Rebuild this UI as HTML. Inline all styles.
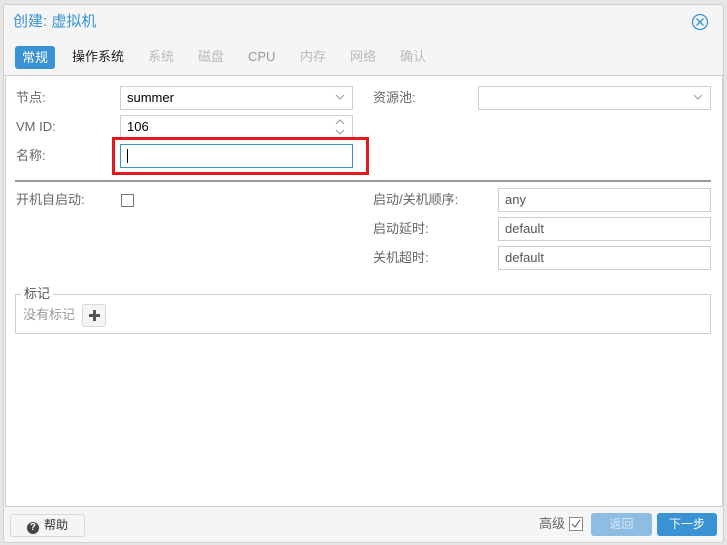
<!DOCTYPE html>
<html><head><meta charset="utf-8"><style>
*{box-sizing:border-box;margin:0;padding:0}
body{width:727px;height:545px;background:#e6e6e6;font-family:"Liberation Sans","Noto Sans CJK SC",sans-serif;font-size:13px;line-height:16px;color:#333;position:relative;overflow:hidden}
.a{position:absolute}
.win{left:3px;top:4px;width:721px;height:539px;background:#f5f5f5;border:1px solid #d0d0d0;border-radius:3px}
.body{left:5px;top:75px;width:718px;height:432px;background:#fff;border:1px solid #cfcfcf}
.lbl{color:#666;font-size:13px;height:16px}
.inp{background:#fff;border:1px solid #cfcfcf;height:24px;padding:0 6px;line-height:22px;color:#000}
.tab{top:49px;font-size:13px;color:#bbb;height:16px}
.btn{border-radius:3px;text-align:center;line-height:23px;height:23px}
</style></head><body>
<div class="a win"></div>
<div class="a" style="left:13px;top:13px;font-size:15px;line-height:18px;color:#3892d4">创建: 虚拟机</div>
<svg class="a" style="left:691px;top:13px" width="18" height="18" viewBox="0 0 18 18"><circle cx="9" cy="9" r="7.5" fill="none" stroke="#3892d4" stroke-width="1.3"/><path d="M5.5 5.5L12.5 12.5M12.5 5.5L5.5 12.5" stroke="#3892d4" stroke-width="1.3"/></svg>
<div class="a btn" style="left:15px;top:46px;width:40px;background:#3892d4;color:#fff">常规</div>
<div class="a tab" style="left:72px;color:#222">操作系统</div>
<div class="a tab" style="left:148px">系统</div>
<div class="a tab" style="left:198px">磁盘</div>
<div class="a tab" style="left:248px;color:#999">CPU</div>
<div class="a tab" style="left:300px">内存</div>
<div class="a tab" style="left:350px">网络</div>
<div class="a tab" style="left:400px">确认</div>
<div class="a body"></div>
<div class="a lbl" style="left:16px;top:90px">节点:</div>
<div class="a inp" style="left:120px;top:86px;width:233px">summer</div>
<svg class="a" style="left:335px;top:93px" width="10" height="8"><path d="M1 2L5 6L9 2" fill="none" stroke="#999"/></svg>
<div class="a lbl" style="left:373px;top:90px">资源池:</div>
<div class="a inp" style="left:478px;top:86px;width:233px"></div>
<svg class="a" style="left:693px;top:93px" width="10" height="8"><path d="M1 2L5 6L9 2" fill="none" stroke="#999"/></svg>
<div class="a lbl" style="left:16px;top:119px">VM ID:</div>
<div class="a inp" style="left:120px;top:115px;width:233px">106</div>
<svg class="a" style="left:335px;top:118px" width="10" height="18"><path d="M1 6L5 2L9 6M1 12L5 16L9 12" fill="none" stroke="#999"/></svg>
<div class="a lbl" style="left:16px;top:148px">名称:</div>
<div class="a" style="left:112px;top:137px;width:257px;height:38px;border:3.5px solid #e3191e"></div>
<div class="a inp" style="left:120px;top:144px;width:233px;border-color:#3892d4"></div>
<div class="a" style="left:127px;top:149px;width:1px;height:14px;background:#000"></div>
<div class="a" style="left:15px;top:180px;width:696px;height:2px;background:#9a9a9a"></div>
<div class="a lbl" style="left:16px;top:192px">开机自启动:</div>
<div class="a" style="left:121px;top:194px;width:13px;height:13px;border:1px solid #777;background:#fff"></div>
<div class="a lbl" style="left:373px;top:192px">启动/关机顺序:</div>
<div class="a inp" style="left:498px;top:188px;width:213px;color:#555">any</div>
<div class="a lbl" style="left:373px;top:221px">启动延时:</div>
<div class="a inp" style="left:498px;top:217px;width:213px;color:#555">default</div>
<div class="a lbl" style="left:373px;top:250px">关机超时:</div>
<div class="a inp" style="left:498px;top:246px;width:213px;color:#555">default</div>
<div class="a" style="left:15px;top:294px;width:696px;height:40px;border:1px solid #cfcfcf"></div>
<div class="a" style="left:21px;top:286px;padding:0 3px;background:#fff;color:#555">标记</div>
<div class="a" style="left:23px;top:307px;color:#999">没有标记</div>
<div class="a" style="left:82px;top:304px;width:24px;height:23px;background:#f5f5f5;border:1px solid #d8d8d8;border-radius:3px"></div>
<div class="a" style="left:89px;top:314px;width:11px;height:3px;background:#555"></div>
<div class="a" style="left:93px;top:310px;width:3px;height:11px;background:#555"></div>
<div class="a btn" style="left:10px;top:514px;width:75px;background:#f5f5f5;border:1px solid #d8d8d8;color:#333;font-size:12px;line-height:21px"><span style="display:inline-block;width:12px;height:12px;border-radius:50%;background:#444;color:#fff;font-size:10px;line-height:12px;font-weight:bold;vertical-align:-1px;margin-right:5px">?</span>帮助</div>
<div class="a" style="left:539px;top:516px;color:#666">高级</div>
<svg class="a" style="left:569px;top:517px" width="14" height="14"><rect x=".5" y=".5" width="13" height="13" fill="#fff" stroke="#888"/><path d="M3 7L6 10L11 3" fill="none" stroke="#555"/></svg>
<div class="a btn" style="left:591px;top:513px;width:61px;background:#8ebde3;color:#d8e8f5;font-size:12px">返回</div>
<div class="a btn" style="left:657px;top:513px;width:60px;background:#3892d4;color:#fff;font-size:12px">下一步</div>
</body></html>
